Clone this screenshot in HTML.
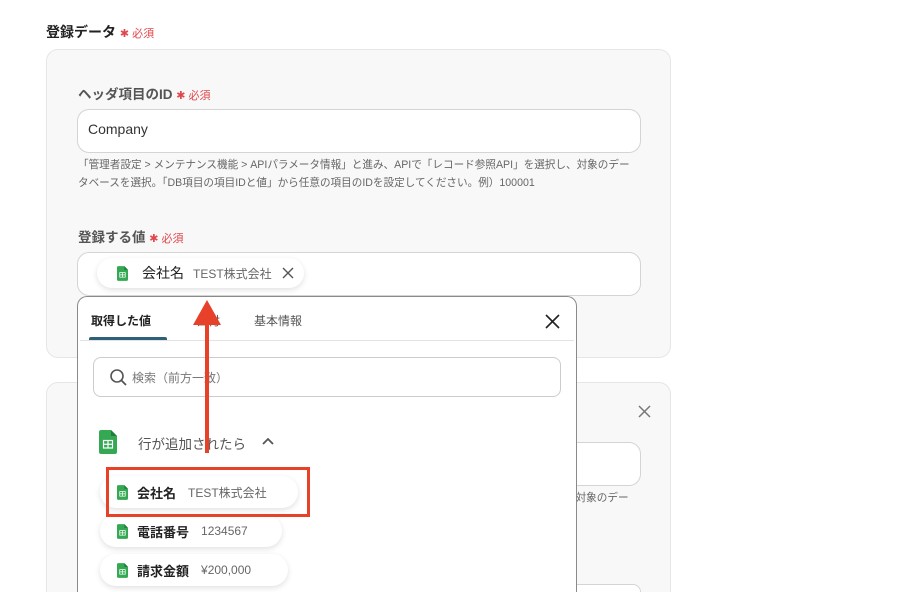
<!DOCTYPE html>
<html><head><meta charset="utf-8"><style>
*{box-sizing:border-box;margin:0;padding:0}
html,body{width:912px;height:592px;overflow:hidden}
body{background:#fff;font-family:"Liberation Sans","Noto Sans CJK JP",sans-serif;position:relative;color:#333}
.a{position:absolute}
.req{color:#e0474c;font-size:11px;font-weight:normal}
.card{position:absolute;left:46px;width:625px;background:#f8f8f8;border:1px solid #e6e6e6;border-radius:12px}
.lbl{font-size:13.5px;color:#555;font-weight:bold}
.inp{position:absolute;background:#fff;border:1px solid #d4d4d4;border-radius:12px}
.help{font-size:10.6px;color:#666;line-height:18px;white-space:nowrap}
.pill{position:absolute;background:#fff;border-radius:16px;box-shadow:0 2px 6px rgba(0,0,0,.12);height:32px;display:flex;align-items:center;padding-left:17px;font-size:13px}
.pill b{margin-left:9px;color:#222}
.pill span{margin-left:12px;color:#666;font-size:12px}
</style></head><body>
<svg width="0" height="0" style="position:absolute"><defs><symbol id="sh" viewBox="0 0 12 16"><path d="M0 1.5Q0 0 1.5 0H8L12 4V14.5Q12 16 10.5 16H1.5Q0 16 0 14.5Z" fill="#34a853"/><path d="M8 0V4H12Z" fill="#1e7e3a"/><rect x="3" y="7" width="6" height="5" fill="none" stroke="#fff" stroke-width="0.8"/><line x1="3" y1="9.5" x2="9" y2="9.5" stroke="#fff" stroke-width="0.8"/><line x1="6" y1="7" x2="6" y2="12" stroke="#fff" stroke-width="0.8"/></symbol></defs></svg>

<div class="a" style="left:46px;top:22px;font-size:14px;font-weight:bold;color:#222">登録データ <span class="req">✱ 必須</span></div>
<div class="card" style="top:49px;height:309px"></div>
<div class="a lbl" style="left:78px;top:83px">ヘッダ項目のID <span class="req">✱ 必須</span></div>
<div class="inp" style="left:77px;top:109px;width:564px;height:44px"></div>
<div class="a" style="left:88px;top:121px;font-size:14px;color:#333">Company</div>
<div class="a help" style="left:78px;top:156px">「管理者設定 &gt; メンテナンス機能 &gt; APIパラメータ情報」と進み、APIで「レコード参照API」を選択し、対象のデー<br>タベースを選択。「DB項目の項目IDと値」から任意の項目のIDを設定してください。例）100001</div>
<div class="a lbl" style="left:78px;top:226px">登録する値 <span class="req">✱ 必須</span></div>
<div class="inp" style="left:77px;top:252px;width:564px;height:44px"></div>
<div class="pill" style="left:97px;top:258px;height:30px;padding-left:20px"><svg width="11" height="15"><use href="#sh"/></svg><b style="font-weight:normal;font-size:14px;margin-left:14px">会社名</b><span style="margin-left:9px">TEST株式会社</span><svg style="margin-left:10px;margin-right:10px" width="12" height="12"><path d="M1 1L11 11M11 1L1 11" stroke="#555" stroke-width="1.4"/></svg></div>

<div class="card" style="top:382px;height:210px;border-bottom:none;border-radius:12px 12px 0 0"></div>
<svg class="a" style="left:638px;top:405px" width="13" height="13"><path d="M1 1L12 12M12 1L1 12" stroke="#777" stroke-width="1.5"/></svg>
<div class="inp" style="left:560px;top:442px;width:81px;height:44px"></div>
<div class="a help" style="left:565px;top:489px">、対象のデー</div>
<div class="inp" style="left:560px;top:584px;width:81px;height:8px;border-bottom:none;border-radius:8px 8px 0 0"></div>

<div class="a" style="left:77px;top:296px;width:500px;height:296px;background:#fff;border:1px solid #8a8a8a;border-bottom:none;border-radius:10px 10px 0 0"></div>
<div class="a" style="left:91px;top:312px;font-size:12px;font-weight:bold;color:#222">取得した値</div>
<div class="a" style="left:89px;top:337px;width:78px;height:4px;background:#2e6179;border-radius:2px 2px 0 0"></div>
<div class="a" style="left:196px;top:312px;font-size:12px;color:#555">日付</div>
<div class="a" style="left:254px;top:312px;font-size:12px;color:#555">基本情報</div>
<svg class="a" style="left:545px;top:314px" width="15" height="15"><path d="M1 1L14 14M14 1L1 14" stroke="#222" stroke-width="1.6"/></svg>
<div class="a" style="left:80px;top:340px;width:494px;height:1px;background:#e3e3e3"></div>
<div class="a" style="left:93px;top:357px;width:468px;height:40px;border:1px solid #ccc;border-radius:8px"></div>
<svg class="a" style="left:109px;top:368px" width="20" height="20"><circle cx="8" cy="8" r="6" fill="none" stroke="#555" stroke-width="1.6"/><line x1="12.5" y1="12.5" x2="17" y2="17" stroke="#555" stroke-width="1.8"/></svg>
<div class="a" style="left:132px;top:369px;font-size:12px;color:#777">検索（前方一致）</div>
<svg class="a" style="left:99px;top:430px" width="18" height="24"><use href="#sh"/></svg>
<div class="a" style="left:138px;top:433px;font-size:13.5px;color:#555">行が追加されたら</div>
<svg class="a" style="left:262px;top:437px" width="12" height="8"><path d="M1 7L6 2L11 7" fill="none" stroke="#555" stroke-width="1.8"/></svg>
<div class="pill" style="left:100px;top:476px;width:198px"><svg width="11" height="15"><use href="#sh"/></svg><b>会社名</b><span>TEST株式会社</span></div>
<div class="pill" style="left:100px;top:515px;width:182px"><svg width="11" height="15"><use href="#sh"/></svg><b>電話番号</b><span>1234567</span></div>
<div class="pill" style="left:100px;top:554px;width:188px"><svg width="11" height="15"><use href="#sh"/></svg><b>請求金額</b><span>¥200,000</span></div>

<div class="a" style="left:106px;top:467px;width:204px;height:50px;border:3px solid #e8412a"></div>
<svg class="a" style="left:190px;top:298px" width="34" height="160"><rect x="15" y="25" width="4" height="130" fill="#e8412a"/><path d="M17 2L31 27H3Z" fill="#e8412a"/></svg>
</body></html>
